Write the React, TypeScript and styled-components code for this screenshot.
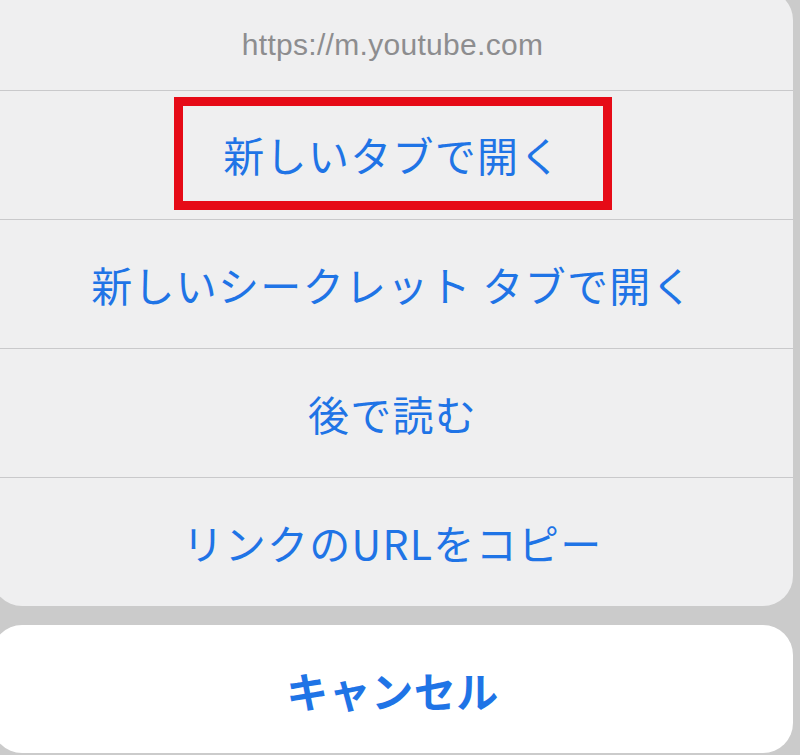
import styled, { createGlobalStyle } from 'styled-components'

const GlobalStyle = createGlobalStyle`
  html, body {
    margin: 0;
    padding: 0;
    background: #cbcbcb;
    overflow: hidden;
  }
`

interface ActionItem {
  id: string
  label: string
  highlighted?: boolean
}

const actions: ActionItem[] = [
  { id: 'new-tab', label: '新しいタブで開く', highlighted: true },
  { id: 'incognito', label: '新しいシークレット タブで開く' },
  { id: 'read-later', label: '後で読む' },
  { id: 'copy-url', label: 'リンクのURLをコピー' },
]

export default function App() {
  return (
    <>
      <GlobalStyle />
      <Page>
        <Sheet>
          <UrlHeader>https://m.youtube.com</UrlHeader>
          {actions.map((action) => (
            <ActionRow key={action.id}>
              {action.highlighted ? (
                <Highlight>{action.label}</Highlight>
              ) : (
                action.label
              )}
            </ActionRow>
          ))}
        </Sheet>
        <CancelButton>キャンセル</CancelButton>
      </Page>
    </>
  )
}

const Page = styled.div`
  width: 800px;
  height: 755px;
  display: flex;
  flex-direction: column;
  gap: 19px;
  font-family: 'Noto Sans CJK JP', 'Noto Sans', sans-serif;
`

const Sheet = styled.div`
  margin: -10px 7px 0 -8px;
  background: #efeff0;
  border-radius: 30px;
  display: flex;
  flex-direction: column;
  overflow: hidden;
`

const UrlHeader = styled.div`
  height: 100px;
  padding-top: 10px;
  box-sizing: border-box;
  display: flex;
  align-items: center;
  justify-content: center;
  font-family: 'Liberation Sans', Arial, sans-serif;
  font-size: 30px;
  letter-spacing: 0.3px;
  color: #8d8d8f;
`

const ActionRow = styled.div`
  height: 128px;
  border-top: 1px solid #c9c9cb;
  display: flex;
  align-items: center;
  justify-content: center;
  font-size: 41px;
  color: #1f74e6;
  letter-spacing: 1.3px;
`

const Highlight = styled.span`
  box-sizing: border-box;
  width: 438px;
  height: 113px;
  margin-bottom: 4px;
  border: 9px solid #e60b17;
  display: inline-flex;
  align-items: center;
  justify-content: center;
  padding-top: 2px;
`

const CancelButton = styled.div`
  margin: 0 7px 0 -8px;
  height: 128px;
  background: #ffffff;
  border-radius: 30px;
  display: flex;
  align-items: center;
  justify-content: center;
  font-size: 42px;
  font-weight: 700;
  letter-spacing: 0.5px;
  color: #1f74e6;
`
